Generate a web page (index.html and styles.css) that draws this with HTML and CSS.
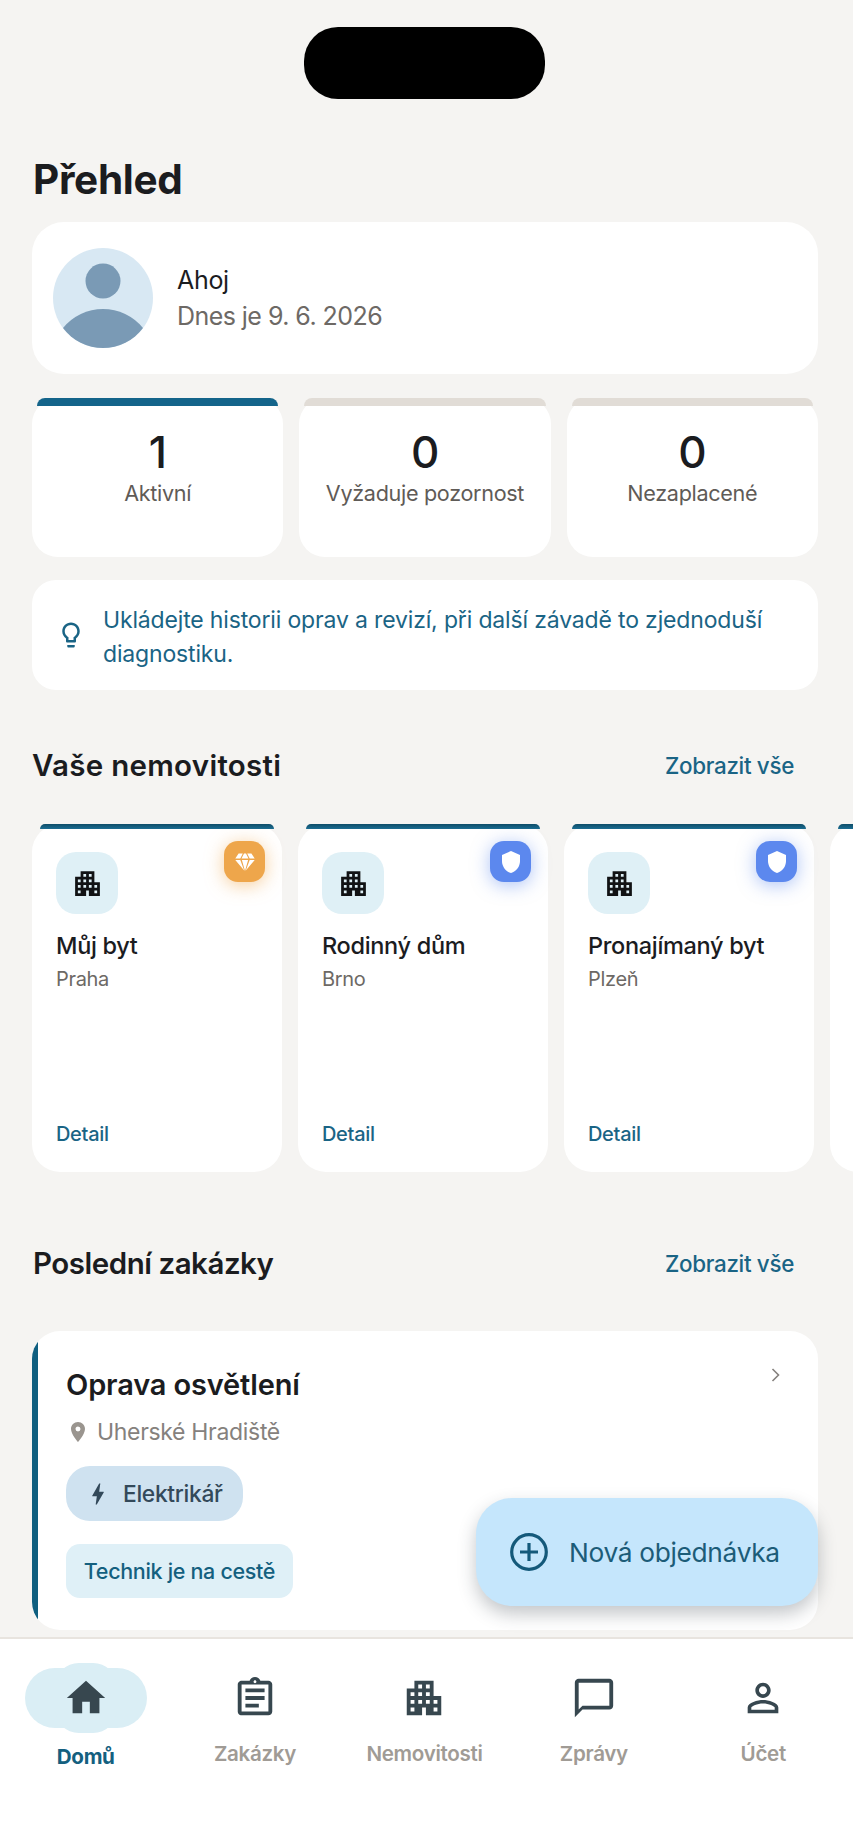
FILE: index.html
```html
<!DOCTYPE html>
<html lang="cs">
<head>
<meta charset="utf-8">
<title>Přehled</title>
<link rel="stylesheet" href="styles.css">
</head>
<body>
<svg class="sprite" aria-hidden="true">
  <symbol id="i-apartment" viewBox="0 0 24 24"><path d="M17 11V3H7v4H3v14h8v-4h2v4h8V11h-4zM7 19H5v-2h2v2zm0-4H5v-2h2v2zm0-4H5V9h2v2zm4 4H9v-2h2v2zm0-4H9V9h2v2zm0-4H9V5h2v2zm4 8h-2v-2h2v2zm0-4h-2V9h2v2zm0-4h-2V5h2v2zm4 12h-2v-2h2v2zm0-4h-2v-2h2v2z"/></symbol>
  <symbol id="i-shield" viewBox="0 0 24 24"><path d="M12 1L3 5v6c0 5.55 3.84 10.74 9 12 5.16-1.26 9-6.45 9-12V5l-9-4z"/></symbol>
  <symbol id="i-diamond" viewBox="0 0 24 24"><path d="M5.6 3.5h4.2L7.3 8.6H2.3zM11 3.5h2l2.5 5.1h-7zM14.2 3.5h4.2l3.3 5.1h-5zM2.3 10.1h5l3.9 10.4zM8.9 10.1h6.2L12 20.9zM16.7 10.1h5l-8.9 10.4z"/></symbol>
</svg>
<div class="page">
  <main class="content">
    <div class="island"></div>
    <h1 class="title">Přehled</h1>

    <section class="hello card">
      <svg class="avatar" viewBox="0 0 100 100">
        <circle class="avatar-bg" cx="50" cy="50" r="50"/>
        <circle class="avatar-fg" cx="50" cy="33" r="17.5"/>
        <path class="avatar-fg" d="M10 80A51.6 51.6 0 0 1 90 80A50 50 0 0 1 10 80z"/>
      </svg>
      <div class="hello-text">
        <div class="hello-name">Ahoj</div>
        <div class="hello-date">Dnes je 9. 6. 2026</div>
      </div>
    </section>

    <section class="stats">
      <div class="stat stat-active"><div class="stat-num">1</div><div class="stat-label">Aktivní</div></div>
      <div class="stat"><div class="stat-num">0</div><div class="stat-label">Vyžaduje pozornost</div></div>
      <div class="stat"><div class="stat-num">0</div><div class="stat-label">Nezaplacené</div></div>
    </section>

    <section class="tip card">
      <svg class="tip-icon" viewBox="0 0 24 24"><path d="M9 21c0 .55.45 1 1 1h4c.55 0 1-.45 1-1v-1H9v1zm3-19C8.140 2 5 5.140 5 9c0 2.380 1.190 4.470 3 5.740V17c0 .55.45 1 1 1h6c.55 0 1-.45 1-1v-2.260c1.810-1.270 3-3.360 3-5.740 0-3.860-3.140-7-7-7zm2.850 11.100l-.85.6V16h-4v-2.300l-.85-.6C7.800 12.160 7 10.630 7 9c0-2.760 2.240-5 5-5s5 2.240 5 5c0 1.630-.8 3.160-2.150 4.100z"/></svg>
      <p class="tip-text">Ukládejte historii oprav a revizí, při další závadě to zjednoduší diagnostiku.</p>
    </section>

    <div class="section-head section-head-first">
      <h2 class="section-title">Vaše nemovitosti</h2>
      <a class="section-link">Zobrazit vše</a>
    </div>

    <div class="properties">
      <article class="property">
        <div class="badge badge-gold"><svg class="badge-icon" viewBox="0 0 24 24"><use href="#i-diamond"/></svg></div>
        <div class="tile"><svg class="tile-icon" viewBox="0 0 24 24"><use href="#i-apartment"/></svg></div>
        <div class="property-name">Můj byt</div>
        <div class="property-city">Praha</div>
        <a class="property-link">Detail</a>
      </article>
      <article class="property">
        <div class="badge badge-blue"><svg class="badge-icon" viewBox="0 0 24 24"><use href="#i-shield"/></svg></div>
        <div class="tile"><svg class="tile-icon" viewBox="0 0 24 24"><use href="#i-apartment"/></svg></div>
        <div class="property-name">Rodinný dům</div>
        <div class="property-city">Brno</div>
        <a class="property-link">Detail</a>
      </article>
      <article class="property">
        <div class="badge badge-blue"><svg class="badge-icon" viewBox="0 0 24 24"><use href="#i-shield"/></svg></div>
        <div class="tile"><svg class="tile-icon" viewBox="0 0 24 24"><use href="#i-apartment"/></svg></div>
        <div class="property-name">Pronajímaný byt</div>
        <div class="property-city">Plzeň</div>
        <a class="property-link">Detail</a>
      </article>
      <article class="property"></article>
    </div>

    <div class="section-head section-head-second">
      <h2 class="section-title">Poslední zakázky</h2>
      <a class="section-link">Zobrazit vše</a>
    </div>

    <article class="order">
      <svg class="order-chevron" viewBox="0 0 10 14"><path d="M1.500 1l6 6-6 6"/></svg>
      <h3 class="order-title">Oprava osvětlení</h3>
      <div class="order-place">
        <svg class="pin" viewBox="0 0 24 24"><path d="M12 2C8.130 2 5 5.130 5 9c0 5.250 7 13 7 13s7-7.750 7-13c0-3.870-3.130-7-7-7zm0 9.500a2.500 2.500 0 0 1 0-5 2.500 2.500 0 0 1 0 5z"/></svg>
        <span>Uherské Hradiště</span>
      </div>
      <div class="trade">
        <svg class="bolt" viewBox="0 0 24 24"><path d="M11 21h-1l1-7H7.500c-.58 0-.57-.32-.38-.66.19-.34.05-.08.07-.12C8.480 10.940 10.420 7.540 13 3h1l-1 7h3.500c.49 0 .56.33.47.51l-.07.15C12.960 17.550 11 21 11 21z"/></svg>
        <span>Elektrikář</span>
      </div>
      <div class="status">Technik je na cestě</div>
    </article>
  </main>

  <button class="fab">
    <svg class="fab-icon" viewBox="0 0 38 38"><circle cx="19" cy="19" r="17.300"/><path d="M19 10v18M10 19h18"/></svg>
    <span>Nová objednávka</span>
  </button>

  <nav class="tabbar">
    <a class="tab tab-active">
      <span class="tab-icon"><svg class="nav-svg" viewBox="0 0 24 24"><path d="M10 20v-6h4v6h5v-8h3L12 3 2 12h3v8z"/></svg></span>
      <span class="tab-label">Domů</span>
    </a>
    <a class="tab">
      <span class="tab-icon"><svg class="nav-svg" viewBox="0 0 24 24"><path d="M7 15h7v2H7zm0-4h10v2H7zm0-4h10v2H7zm12-4h-4.180C14.400 1.840 13.300 1 12 1c-1.300 0-2.400.84-2.820 2H5c-.14 0-.27.01-.4.04-.39.08-.74.28-1.010.55-.18.18-.33.4-.43.64-.1.23-.16.49-.16.77v14c0 .27.06.54.16.78s.25.45.43.64c.27.27.62.47 1.010.55.13.02.26.03.4.03h14c1.100 0 2-.9 2-2V5c0-1.100-.9-2-2-2zm-7-.25c.41 0 .75.34.75.75s-.34.75-.75.75-.75-.34-.75-.75.34-.75.75-.75zM19 19H5V5h14v14z"/></svg></span>
      <span class="tab-label">Zakázky</span>
    </a>
    <a class="tab">
      <span class="tab-icon"><svg class="nav-svg" viewBox="0 0 24 24"><use href="#i-apartment"/></svg></span>
      <span class="tab-label">Nemovitosti</span>
    </a>
    <a class="tab">
      <span class="tab-icon"><svg class="nav-svg" viewBox="0 0 24 24"><path d="M20 2H4c-1.100 0-2 .9-2 2v18l4-4h14c1.100 0 2-.9 2-2V4c0-1.100-.9-2-2-2zm0 14H6l-2 2V4h16v12z"/></svg></span>
      <span class="tab-label">Zprávy</span>
    </a>
    <a class="tab">
      <span class="tab-icon"><svg class="nav-svg" viewBox="0 0 24 24"><path d="M12 5.900c1.160 0 2.100.94 2.100 2.100s-.94 2.100-2.100 2.100S9.900 9.160 9.900 8s.94-2.100 2.100-2.100m0 9c2.970 0 6.100 1.460 6.100 2.100v1.100H5.900V17c0-.64 3.130-2.100 6.100-2.100M12 4C9.790 4 8 5.790 8 8s1.790 4 4 4 4-1.790 4-4-1.790-4-4-4zm0 9c-2.670 0-8 1.340-8 4v3h16v-3c0-2.660-5.330-4-8-4z"/></svg></span>
      <span class="tab-label">Účet</span>
    </a>
  </nav>
</div>
</body>
</html>
```

FILE: styles.css
```css
* { box-sizing: border-box; }

html, body {
  margin: 0;
  padding: 0;
  background: #f5f4f2;
}

body {
  font-family: "Inter", "Noto Sans", sans-serif;
  color: #1b1c1f;
  letter-spacing: -0.02em;
}

h1, h2, h3, p { margin: 0; }

.sprite { display: none; }

.page {
  position: relative;
  width: 853px;
  height: 1844px;
  display: flex;
  flex-direction: column;
  overflow: hidden;
}

.content {
  flex: 0 0 1637px;
  padding: 27px 35px 0 32px;
  overflow: hidden;
}

.island {
  width: 241px;
  height: 72px;
  margin: 0 0 0 272px;
  background: #000;
  border-radius: 34px;
}

.title {
  margin: 57px 0 18px 1px;
  font-size: 40.500px;
  line-height: 48px;
  font-weight: 700;
}

.card {
  background: #fff;
}

.hello {
  height: 152px;
  border-radius: 32px;
  padding: 0 21px;
  display: flex;
  align-items: center;
  gap: 24px;
}

.avatar {
  width: 100px;
  height: 100px;
  flex: none;
}

.avatar-bg { fill: #d8e8f3; }
.avatar-fg { fill: #7a9ab5; }

.hello-name {
  font-size: 25px;
  line-height: 36px;
  color: #1b1c1f;
}

.hello-date {
  font-size: 25px;
  line-height: 36px;
  letter-spacing: -0.55px;
  color: #6d6965;
}

.stats {
  margin-top: 24px;
  display: grid;
  grid-template-columns: repeat(3, 1fr);
  gap: 16px;
}

.stat {
  position: relative;
  height: 159px;
  background: #fff;
  border-radius: 26px;
  text-align: center;
  padding-top: 28px;
}

.stat::before {
  content: "";
  position: absolute;
  top: 0;
  left: 5px;
  right: 5px;
  height: 8px;
  border-radius: 8px 8px 0 0;
  background: #e1dcd6;
}

.stat-active::before { background: #14648a; }

.stat-num {
  font-size: 44px;
  line-height: 52px;
  font-weight: 500;
}

.stat-label {
  font-size: 21.600px;
  line-height: 32px;
  margin-top: -1px;
  color: #5f5b57;
}

.tip {
  margin-top: 23px;
  height: 110px;
  border-radius: 24px;
  padding: 0 24px 0 24px;
  display: flex;
  align-items: center;
  gap: 17px;
}

.tip-icon {
  width: 30px;
  height: 30px;
  flex: none;
  fill: #1a6485;
}

.tip-text {
  margin-top: 4px;
  font-size: 23px;
  line-height: 34px;
  letter-spacing: -0.16px;
  color: #1a6485;
}

.section-head {
  height: 40px;
  display: flex;
  align-items: center;
  justify-content: space-between;
  padding: 0 24px 0 0;
}

.section-head-first { margin-top: 55px; }
.section-head-second { margin-top: 71px; }

.section-title {
  font-size: 29.500px;
  line-height: 40px;
  font-weight: 600;
  letter-spacing: 0.28px;
}

.section-head-second .section-title {
  margin-left: 1px;
  letter-spacing: -0.48px;
}

.section-link {
  font-size: 22.400px;
  font-weight: 500;
  color: #1a6485;
}

.properties {
  margin-top: 39px;
  display: flex;
  gap: 16px;
  width: 1000px;
}

.property {
  position: relative;
  flex: 0 0 250px;
  height: 348px;
  background: #fff;
  border-radius: 28px;
  padding: 28px 24px 0;
  display: flex;
  flex-direction: column;
}

.property::before {
  content: "";
  position: absolute;
  top: 0;
  left: 8px;
  right: 8px;
  height: 5px;
  border-radius: 6px 6px 0 0;
  background: linear-gradient(#0e4d69, #1b6d92);
}

.badge {
  position: absolute;
  top: 17px;
  right: 17px;
  width: 41px;
  height: 41px;
  border-radius: 14px;
  display: flex;
  align-items: center;
  justify-content: center;
}

.badge-gold {
  background: #eea64b;
  box-shadow: 0 3px 18px rgba(238, 166, 75, 0.55);
}

.badge-blue {
  background: #5c88ee;
  box-shadow: 0 3px 18px rgba(92, 136, 238, 0.5);
}

.badge-icon {
  width: 24px;
  height: 24px;
  fill: #fff;
}

.tile {
  width: 62px;
  height: 62px;
  border-radius: 20px;
  background: #dff0f6;
  display: flex;
  align-items: center;
  justify-content: center;
}

.tile-icon {
  width: 33px;
  height: 33px;
  fill: #111214;
}

.property-name {
  margin-top: 16px;
  font-size: 23.500px;
  line-height: 32px;
  font-weight: 500;
  white-space: nowrap;
}

.property-city {
  margin-top: 2px;
  font-size: 20px;
  line-height: 30px;
  color: #6d6965;
}

.property-link {
  margin-top: auto;
  margin-bottom: 24px;
  font-size: 20px;
  line-height: 28px;
  font-weight: 500;
  color: #1a6485;
}

.order {
  position: relative;
  margin-top: 48px;
  height: 299px;
  background: #fff;
  border-radius: 28px;
  padding: 34px 0 0 34px;
  overflow: hidden;
}

.order::before {
  content: "";
  position: absolute;
  left: 0;
  top: 0;
  bottom: 0;
  width: 6px;
  background: #0f5f80;
}

.order-chevron {
  position: absolute;
  top: 37px;
  right: 37px;
  width: 10px;
  height: 14px;
  fill: none;
  stroke: #85817d;
  stroke-width: 1.6;
}

.order-title {
  font-size: 29px;
  line-height: 40px;
  font-weight: 600;
  letter-spacing: -0.15px;
}

.order-place {
  margin-top: 11px;
  display: flex;
  align-items: center;
  gap: 7px;
  font-size: 23px;
  line-height: 32px;
  color: #85817d;
}

.pin {
  width: 24px;
  height: 24px;
  fill: #9a958f;
}

.trade {
  margin-top: 18px;
  width: 177px;
  height: 55px;
  border-radius: 24px;
  background: #cfe2f0;
  display: flex;
  align-items: center;
  padding-left: 18px;
  gap: 11px;
  font-size: 22.800px;
  font-weight: 500;
  color: #33495a;
}

.bolt {
  width: 28px;
  height: 28px;
  fill: #33495a;
}

.status {
  margin-top: 23px;
  width: 227px;
  height: 54px;
  border-radius: 14px;
  background: #dff0f7;
  display: flex;
  align-items: center;
  justify-content: center;
  font-size: 21.500px;
  font-weight: 500;
  color: #14607f;
  white-space: nowrap;
}

.fab {
  position: absolute;
  left: 476px;
  top: 1498px;
  width: 342px;
  height: 108px;
  border: 0;
  border-radius: 36px;
  background: #c5e6fc;
  box-shadow: 0 8px 18px rgba(40, 50, 60, 0.28);
  display: flex;
  align-items: center;
  padding: 0 0 0 34px;
  gap: 21px;
  font-family: inherit;
  letter-spacing: inherit;
  font-size: 26.300px;
  color: #1c5c78;
}

.fab-icon {
  width: 38px;
  height: 38px;
  flex: none;
  fill: none;
  stroke: #14597a;
  stroke-width: 3.200;
}

.tabbar {
  flex: 1;
  background: #fff;
  border-top: 2px solid #e8e4df;
  display: grid;
  grid-template-columns: repeat(5, 169.400px);
  padding: 24px 0 0 1px;
}

.tab {
  display: flex;
  flex-direction: column;
  align-items: center;
}

.tab-icon {
  position: relative;
  width: 122px;
  height: 70px;
  display: flex;
  align-items: center;
  justify-content: center;
}

/* Active tab highlight: a wide lozenge with a taller hump through the middle */
.tab-active .tab-icon::before,
.tab-active .tab-icon::after {
  content: "";
  position: absolute;
  background: #daeef5;
}

.tab-active .tab-icon::before {
  top: 5px;
  bottom: 5px;
  left: 0;
  right: 0;
  border-radius: 32px;
}

.tab-active .tab-icon::after {
  top: 0;
  bottom: 0;
  left: 30px;
  right: 30px;
  border-radius: 24px;
}

.nav-svg {
  position: relative;
  z-index: 1;
  width: 46px;
  height: 46px;
  fill: #37474f;
}

.tab-label {
  margin-top: 6px;
  font-size: 20.600px;
  line-height: 30px;
  font-weight: 600;
  color: #a09b95;
}

.tab-active .tab-label {
  margin-top: 9px;
  color: #14607f;
  font-weight: 700;
}
```
